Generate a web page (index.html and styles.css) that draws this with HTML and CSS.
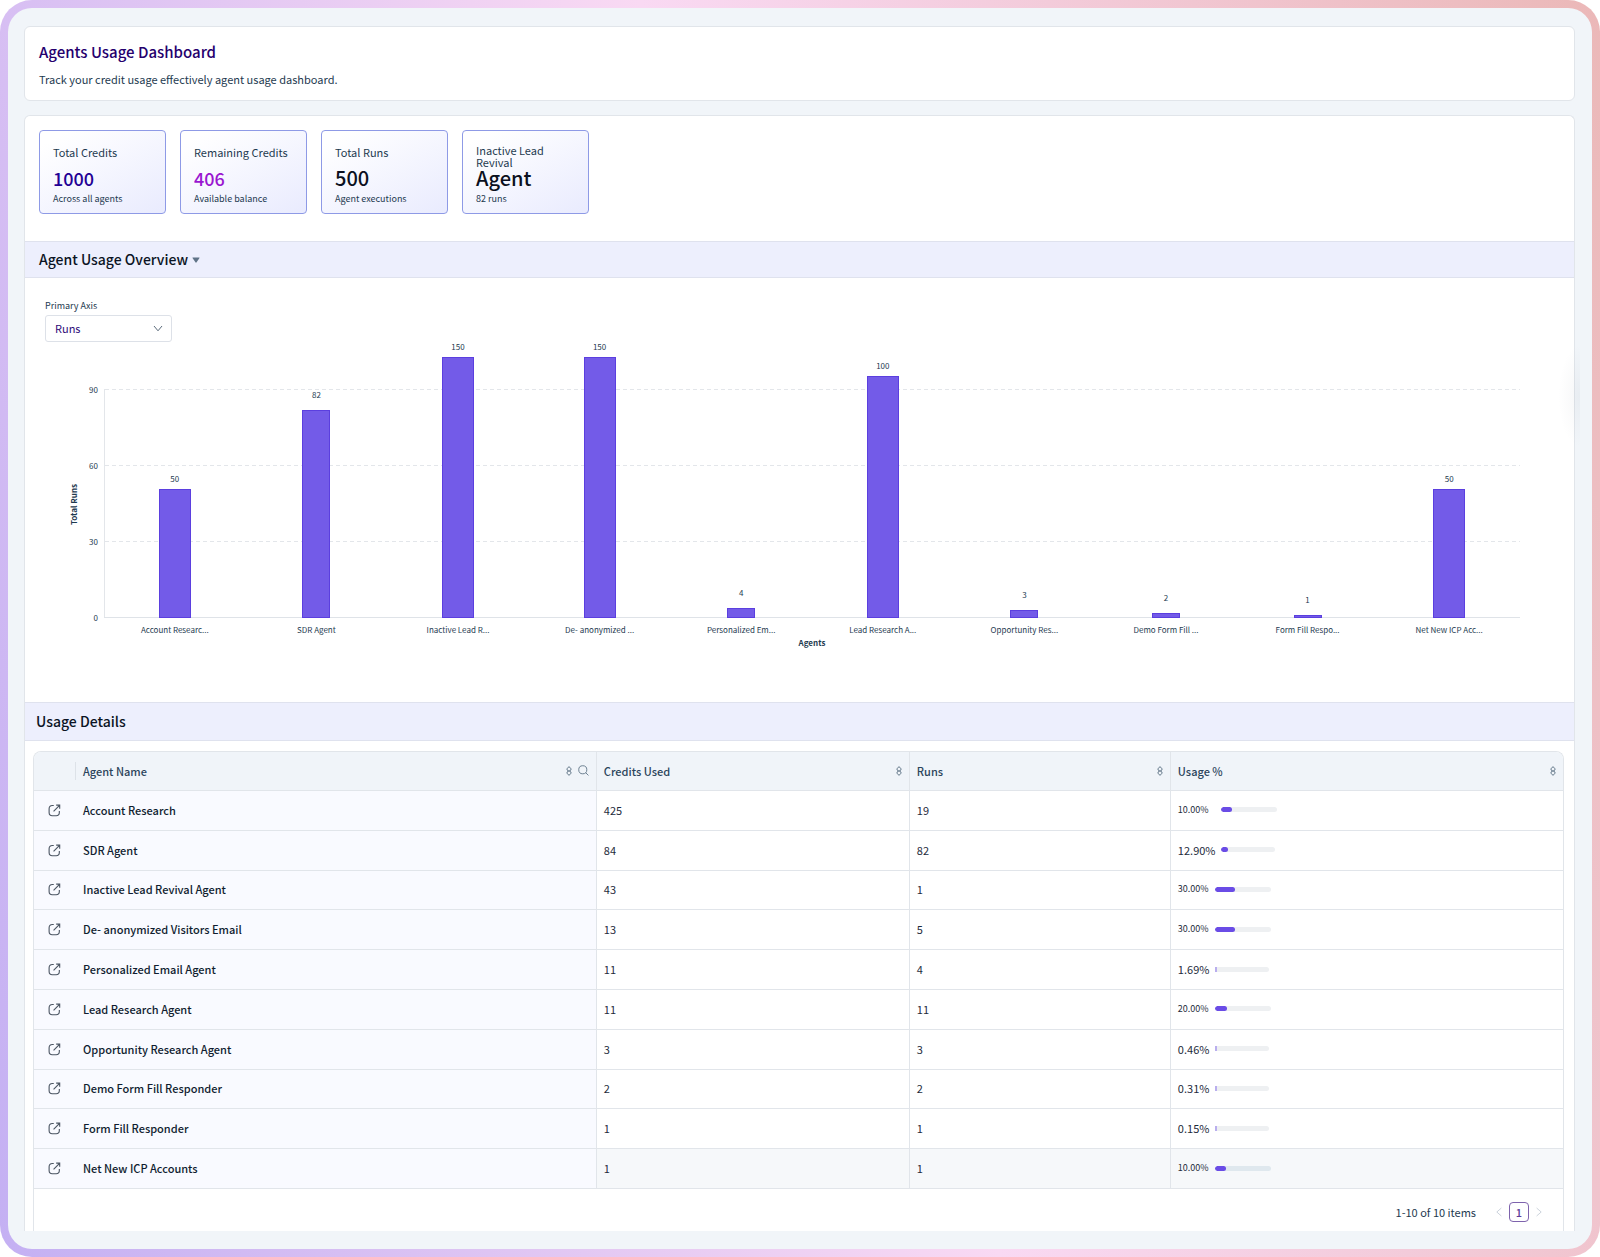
FILE: index.html
```html
<!DOCTYPE html>
<html lang="en">
<head>
    <meta charset="UTF-8">
    <meta name="viewport" content="width=device-width, initial-scale=1.0">
    <title>Agents Usage Dashboard</title>
    <link rel="stylesheet" href="styles.css">
</head>
<body>
    <!-- Shared icons -->
    <svg class="icon-defs" aria-hidden="true">
        <symbol id="icon-open" viewBox="0 0 14 14">
            <path d="M6.2 1.6H4.6C2.4 1.6 1.2 2.8 1.2 5v4.2c0 2.2 1.2 3.4 3.4 3.4h4.2c2.2 0 3.4-1.2 3.4-3.4V7.6M6 8l6.4-6.6M8.8 1.2h3.8v3.9" />
        </symbol>
        <symbol id="icon-sort" viewBox="0 0 6 10">
            <path d="M3 .6 5 2.8v1.1L3.6 4.8H2.4L1 3.9V2.8zM3 9.4 5 7.2V6.1l-1.4-.9H2.4L1 6.1v1.1z" />
        </symbol>
        <symbol id="icon-search" viewBox="0 0 12 12">
            <circle cx="5.2" cy="5.2" r="4.4" />
            <path d="m8.4 8.4 3 3" />
        </symbol>
    </svg>

    <div class="frame">
        <header class="page-header">
            <h1>Agents Usage Dashboard</h1>
            <p>Track your credit usage effectively agent usage dashboard.</p>
        </header>

        <main class="panel">
            <section class="stats">
                <div class="stat-card">
                    <div class="stat-label">Total Credits</div>
                    <div class="stat-value indigo">1000</div>
                    <div class="stat-note">Across all agents</div>
                </div>
                <div class="stat-card">
                    <div class="stat-label">Remaining Credits</div>
                    <div class="stat-value purple">406</div>
                    <div class="stat-note">Available balance</div>
                </div>
                <div class="stat-card">
                    <div class="stat-label">Total Runs</div>
                    <div class="stat-value">500</div>
                    <div class="stat-note">Agent executions</div>
                </div>
                <div class="stat-card">
                    <div class="stat-label two-lines">Inactive Lead Revival</div>
                    <div class="stat-value">Agent</div>
                    <div class="stat-note">82 runs</div>
                </div>
            </section>

            <section>
                <h2 class="section-title">
                    <button type="button" class="toggle">Agent Usage Overview
                        <svg class="caret" viewBox="0 0 8 6" aria-hidden="true"><path d="M.8.4h6.4q.6 0 .3.6L4.6 5.3q-.6.7-1.2 0L.5 1Q.2.4.8.4z" /></svg>
                    </button>
                </h2>

                <div class="axis-picker">
                    <label for="primaryAxis">Primary Axis</label>
                    <div class="select-box">
                        <select id="primaryAxis">
                            <option>Runs</option>
                            <option>Credits</option>
                        </select>
                        <svg class="chevron" viewBox="0 0 10 7" aria-hidden="true"><path d="m1 1 4 4.8L9 1" /></svg>
                    </div>
                </div>

                <div class="chart">
                    <div class="y-title">Total Runs</div>
                    <div class="y-ticks"><span>90</span><span>60</span><span>30</span><span>0</span></div>
                    <div class="plot">
                        <svg class="grid-lines" aria-hidden="true">
                            <line x1="0" y1="0.5" x2="100%" y2="0.5" />
                            <line x1="0" y1="76.5" x2="100%" y2="76.5" />
                            <line x1="0" y1="152.5" x2="100%" y2="152.5" />
                        </svg>
                        <div class="bar-col tall"><span>50</span><div class="bar" style="height: 129px"></div></div>
                        <div class="bar-col"><span>82</span><div class="bar" style="height: 208px"></div></div>
                        <div class="bar-col tall"><span>150</span><div class="bar" style="height: 261px"></div></div>
                        <div class="bar-col tall"><span>150</span><div class="bar" style="height: 261px"></div></div>
                        <div class="bar-col"><span>4</span><div class="bar" style="height: 10px"></div></div>
                        <div class="bar-col tall"><span>100</span><div class="bar" style="height: 242px"></div></div>
                        <div class="bar-col"><span>3</span><div class="bar" style="height: 8px"></div></div>
                        <div class="bar-col"><span>2</span><div class="bar" style="height: 5px"></div></div>
                        <div class="bar-col"><span>1</span><div class="bar" style="height: 3px"></div></div>
                        <div class="bar-col tall"><span>50</span><div class="bar" style="height: 129px"></div></div>
                    </div>
                    <div class="x-labels">
                        <span>Account Researc...</span>
                        <span>SDR Agent</span>
                        <span>Inactive Lead R...</span>
                        <span>De- anonymized ...</span>
                        <span>Personalized Em...</span>
                        <span>Lead Research A...</span>
                        <span>Opportunity Res...</span>
                        <span>Demo Form Fill ...</span>
                        <span>Form Fill Respo...</span>
                        <span>Net New ICP Acc...</span>
                    </div>
                    <div class="x-title">Agents</div>
                </div>
            </section>

            <section class="details">
                <h2 class="section-title details-title">Usage Details</h2>
                <div class="table-box">
                    <table>
                        <colgroup>
                            <col class="col-open">
                            <col class="col-name">
                            <col class="col-credits">
                            <col class="col-runs">
                            <col>
                        </colgroup>
                        <thead>
                            <tr>
                                <th class="open-head"></th>
                                <th><div class="head-cell">Agent Name<span class="head-icons"><button type="button" aria-label="Sort"><svg class="sort"><use href="#icon-sort" /></svg></button><button type="button" aria-label="Search"><svg class="search"><use href="#icon-search" /></svg></button></span></div></th>
                                <th><div class="head-cell">Credits Used<span class="head-icons"><button type="button" aria-label="Sort"><svg class="sort"><use href="#icon-sort" /></svg></button></span></div></th>
                                <th><div class="head-cell">Runs<span class="head-icons"><button type="button" aria-label="Sort"><svg class="sort"><use href="#icon-sort" /></svg></button></span></div></th>
                                <th><div class="head-cell">Usage %<span class="head-icons"><button type="button" aria-label="Sort"><svg class="sort"><use href="#icon-sort" /></svg></button></span></div></th>
                            </tr>
                        </thead>
                        <tbody>
                            <tr>
                                <td class="open"><a href="#" aria-label="Open"><svg><use href="#icon-open" /></svg></a></td>
                                <td class="name">Account Research</td>
                                <td>425</td>
                                <td>19</td>
                                <td><div class="usage compact spaced"><span>10.00%</span><div class="track"><div class="fill" style="width: 20%"></div></div></div></td>
                            </tr>
                            <tr>
                                <td class="open"><a href="#" aria-label="Open"><svg><use href="#icon-open" /></svg></a></td>
                                <td class="name">SDR Agent</td>
                                <td>84</td>
                                <td>82</td>
                                <td><div class="usage spaced"><span>12.90%</span><div class="track"><div class="fill" style="width: 12.9%"></div></div></div></td>
                            </tr>
                            <tr>
                                <td class="open"><a href="#" aria-label="Open"><svg><use href="#icon-open" /></svg></a></td>
                                <td class="name">Inactive Lead Revival Agent</td>
                                <td>43</td>
                                <td>1</td>
                                <td><div class="usage compact"><span>30.00%</span><div class="track"><div class="fill" style="width: 36%"></div></div></div></td>
                            </tr>
                            <tr>
                                <td class="open"><a href="#" aria-label="Open"><svg><use href="#icon-open" /></svg></a></td>
                                <td class="name">De- anonymized Visitors Email</td>
                                <td>13</td>
                                <td>5</td>
                                <td><div class="usage compact"><span>30.00%</span><div class="track"><div class="fill" style="width: 36%"></div></div></div></td>
                            </tr>
                            <tr>
                                <td class="open"><a href="#" aria-label="Open"><svg><use href="#icon-open" /></svg></a></td>
                                <td class="name">Personalized Email Agent</td>
                                <td>11</td>
                                <td>4</td>
                                <td><div class="usage low"><span>1.69%</span><div class="track"><div class="fill" style="width: 4%"></div></div></div></td>
                            </tr>
                            <tr>
                                <td class="open"><a href="#" aria-label="Open"><svg><use href="#icon-open" /></svg></a></td>
                                <td class="name">Lead Research Agent</td>
                                <td>11</td>
                                <td>11</td>
                                <td><div class="usage compact"><span>20.00%</span><div class="track"><div class="fill" style="width: 22%"></div></div></div></td>
                            </tr>
                            <tr>
                                <td class="open"><a href="#" aria-label="Open"><svg><use href="#icon-open" /></svg></a></td>
                                <td class="name">Opportunity Research Agent</td>
                                <td>3</td>
                                <td>3</td>
                                <td><div class="usage low"><span>0.46%</span><div class="track"><div class="fill" style="width: 4%"></div></div></div></td>
                            </tr>
                            <tr>
                                <td class="open"><a href="#" aria-label="Open"><svg><use href="#icon-open" /></svg></a></td>
                                <td class="name">Demo Form Fill Responder</td>
                                <td>2</td>
                                <td>2</td>
                                <td><div class="usage low"><span>0.31%</span><div class="track"><div class="fill" style="width: 4%"></div></div></div></td>
                            </tr>
                            <tr>
                                <td class="open"><a href="#" aria-label="Open"><svg><use href="#icon-open" /></svg></a></td>
                                <td class="name">Form Fill Responder</td>
                                <td>1</td>
                                <td>1</td>
                                <td><div class="usage low"><span>0.15%</span><div class="track"><div class="fill" style="width: 4%"></div></div></div></td>
                            </tr>
                            <tr class="active">
                                <td class="open"><a href="#" aria-label="Open"><svg><use href="#icon-open" /></svg></a></td>
                                <td class="name">Net New ICP Accounts</td>
                                <td>1</td>
                                <td>1</td>
                                <td><div class="usage compact"><span>10.00%</span><div class="track"><div class="fill" style="width: 20%"></div></div></div></td>
                            </tr>
                        </tbody>
                    </table>
                    <nav class="pagination" aria-label="Pages">
                        <span>1-10 of 10 items</span>
                        <button type="button" class="arrow" aria-label="Previous" disabled><svg viewBox="0 0 6 10"><path d="M5.4 1 .8 5l4.6 4" /></svg></button>
                        <button type="button" class="page">1</button>
                        <button type="button" class="arrow" aria-label="Next" disabled><svg viewBox="0 0 6 10"><path d="M.6 1l4.6 4L.6 9" /></svg></button>
                    </nav>
                </div>
            </section>
        </main>
    </div>
</body>
</html>
```
FILE: styles.css
```css
* {
    box-sizing: border-box;
}

body {
    margin: 0;
    background-color: #fff;
    font-family: "Noto Sans CJK SC", "Open Sans", sans-serif;
    font-size: 11px;
    color: #1e3a50;
}

h1, h2, p {
    margin: 0;
}

button {
    padding: 0;
    border: none;
    background: none;
    font: inherit;
    color: inherit;
    cursor: pointer;
}

svg {
    display: block;
    fill: none;
}

.icon-defs {
    display: none;
}

.frame {
    position: relative;
    min-height: 100vh;
    padding: 18px 17px 18px 16px;
    display: flex;
    flex-direction: column;
    gap: 14px;
    border: 8px solid transparent;
    border-radius: 32px;
    background:
        linear-gradient(#f1f5f9, #f1f5f9) padding-box,
        linear-gradient(74deg, #c4b0f3 0%, #f9d9f3 51%, #ebb8b8 100%) border-box;
}

.frame::after {
    content: "";
    position: absolute;
    right: 12px;
    top: 336px;
    width: 22px;
    height: 104px;
    background: radial-gradient(ellipse at right, rgba(71, 85, 105, 0.05), transparent 70%);
}

.page-header {
    padding: 13px 14px 11px;
    border: 1px solid #e1e5ea;
    border-radius: 6px;
    background-color: #fff;
}

.page-header h1 {
    font-size: 15px;
    font-weight: 500;
    line-height: 24px;
    color: #25006e;
}

.page-header p {
    margin-top: 5px;
    line-height: 20px;
}

.panel {
    flex: 1;
    border: 1px solid #e1e5ea;
    border-bottom: none;
    border-radius: 6px 6px 0 0;
    background-color: #fff;
}

/* Stat cards */
.stats {
    display: flex;
    flex-wrap: wrap;
    gap: 14px;
    padding: 14px 14px 27px;
}

.stat-card {
    width: 127px;
    padding: 13px 13px 6px;
    border: 1px solid #8e9ae6;
    border-radius: 4px;
    background: linear-gradient(150deg, #fff 10%, #e9ebfe 100%);
}

.stat-label {
    height: 22px;
    line-height: 16px;
    white-space: nowrap;
}

.stat-label.two-lines {
    line-height: 12px;
    white-space: normal;
}

.stat-value {
    font-size: 20px;
    font-weight: 500;
    line-height: 24px;
    color: #0b1020;
}

.stat-value.indigo {
    font-size: 18px;
    color: #230094;
}

.stat-value.purple {
    font-size: 18px;
    color: #9a16d0;
}

.stat-note {
    margin-top: 1px;
    font-size: 9px;
    line-height: 16px;
}

/* Section bars */
.section-title {
    padding: 0 14px;
    border-top: 1px solid #dfe2ee;
    border-bottom: 1px solid #dfe2ee;
    background-color: #edeffd;
    font-size: 14px;
    font-weight: 500;
    line-height: 35px;
    color: #0b1424;
}

.details-title {
    padding: 0 11px;
    line-height: 37px;
}

.toggle {
    display: flex;
    align-items: center;
    gap: 4px;
}

.caret {
    width: 8px;
    height: 6px;
    fill: #5f7387;
}

/* Chart */
.axis-picker {
    padding: 20px 20px 0;
}

.axis-picker label {
    display: block;
    margin-bottom: 2px;
    font-size: 9px;
    line-height: 15px;
}

.select-box {
    position: relative;
    width: 127px;
}

.select-box select {
    display: block;
    width: 100%;
    height: 27px;
    padding: 0 9px 1px;
    appearance: none;
    border: 1px solid #dde1e8;
    border-radius: 3px;
    background-color: #fff;
    font: inherit;
    color: #2e0a78;
}

.chevron {
    position: absolute;
    right: 9px;
    top: 10px;
    width: 10px;
    height: 7px;
    stroke: #5b6b7b;
    pointer-events: none;
}

.chart {
    display: grid;
    grid-template-columns: 12px 18px 1fr;
    padding: 0 54px 53px 43px;
    font-size: 8px;
}

.y-title {
    height: 228px;
    align-self: end;
    writing-mode: vertical-rl;
    transform: rotate(180deg);
    line-height: 12px;
    font-weight: 700;
    text-align: center;
}

.y-ticks {
    height: 240px;
    align-self: end;
    margin-bottom: -6px;
    display: flex;
    flex-direction: column;
    justify-content: space-between;
    line-height: 12px;
    text-align: right;
}

.plot {
    position: relative;
    height: 276px;
    margin-left: 6px;
    display: grid;
    grid-template-columns: repeat(10, 1fr);
    align-items: end;
    border-bottom: 1px solid #dfe3e8;
}

.grid-lines {
    position: absolute;
    left: 0;
    bottom: 0;
    width: 100%;
    height: 228px;
    border-left: 1px solid #e3e6ea;
}

.grid-lines line {
    stroke: #e3e6ea;
    stroke-dasharray: 4 3;
}

.bar-col {
    position: relative;
    display: flex;
    flex-direction: column;
    align-items: center;
    gap: 10px;
    line-height: 10px;
}

.bar-col.tall {
    gap: 5px;
}

.bar {
    width: 28px;
    border: 1px solid #5b3fdf;
    background-color: #735be8;
}

.tall .bar {
    width: 32px;
}

.x-labels {
    grid-column: 3;
    margin-left: 6px;
    padding-top: 5px;
    display: grid;
    grid-template-columns: repeat(10, 1fr);
    line-height: 14px;
    text-align: center;
}

.x-title {
    grid-column: 3;
    margin-left: 6px;
    font-weight: 700;
    line-height: 12px;
    text-align: center;
}

/* Usage table */
.table-box {
    margin: 10px 10px 0 8px;
    border: 1px solid #e1e5ea;
    border-bottom: none;
    border-radius: 8px 8px 0 0;
    overflow: hidden;
}

table {
    width: 100%;
    height: 437px;
    table-layout: fixed;
    border-collapse: separate;
    border-spacing: 0;
}

.col-open {
    width: 42px;
}

.col-name {
    width: 34%;
}

.col-credits {
    width: 313px;
}

.col-runs {
    width: 261px;
}

th,
td {
    height: 39px;
    padding: 0 7px 1px;
    border-bottom: 1px solid #e1e5ea;
    line-height: 16px;
    text-align: left;
    color: #1e2b3c;
}

th + th + th,
td + td + td {
    border-left: 1px solid #e1e5ea;
}

th {
    background-color: #f0f4f9;
    font-weight: 500;
    color: #2c455c;
}

.open-head {
    background: linear-gradient(#dde2e8, #dde2e8) right center / 1px 18px no-repeat #f0f4f9;
}

.head-cell,
.head-icons {
    display: flex;
    align-items: center;
    justify-content: space-between;
    gap: 6px;
}

.head-icons svg {
    stroke: #64788a;
}

.sort {
    width: 6px;
    height: 10px;
}

.search {
    width: 11px;
    height: 11px;
}

.open,
.name {
    background-color: #f9faff;
    font-weight: 500;
    color: #101d30;
}

.open {
    padding: 0 14px;
}

.open svg {
    width: 13px;
    height: 13px;
    stroke: #4b5563;
    stroke-width: 1.2;
}

.active td {
    background-color: #f6f8fa;
}

.active .open,
.active .name {
    background-color: #f9faff;
}

.usage {
    display: flex;
    align-items: center;
}

.usage span {
    width: 37px;
}

.usage.spaced span {
    width: 43px;
}

.usage.compact span {
    font-size: 9px;
}

.track {
    width: 54px;
    height: 5px;
    border-radius: 3px;
    background-color: #eef0f2;
    overflow: hidden;
}

.compact .track {
    width: 56px;
}

.low .track {
    border-radius: 0 3px 3px 0;
}

.active .track {
    background-color: #dfe8ee;
}

.fill {
    height: 100%;
    border-radius: 3px;
    background-color: #6a4ce6;
}

.low .fill {
    border-radius: 0;
    background-color: #b9aeee;
}

.pagination {
    display: flex;
    align-items: center;
    justify-content: flex-end;
    gap: 7px;
    padding: 13px 21px 9px;
    line-height: 20px;
}

.pagination span {
    margin-right: 13px;
}

.pagination .page {
    width: 20px;
    height: 20px;
    border: 1px solid #7e63ad;
    border-radius: 4px;
    line-height: 18px;
    font-weight: 500;
    color: #5d3a99;
}

.arrow svg {
    width: 6px;
    height: 10px;
    stroke: #ccd3dc;
}
```
